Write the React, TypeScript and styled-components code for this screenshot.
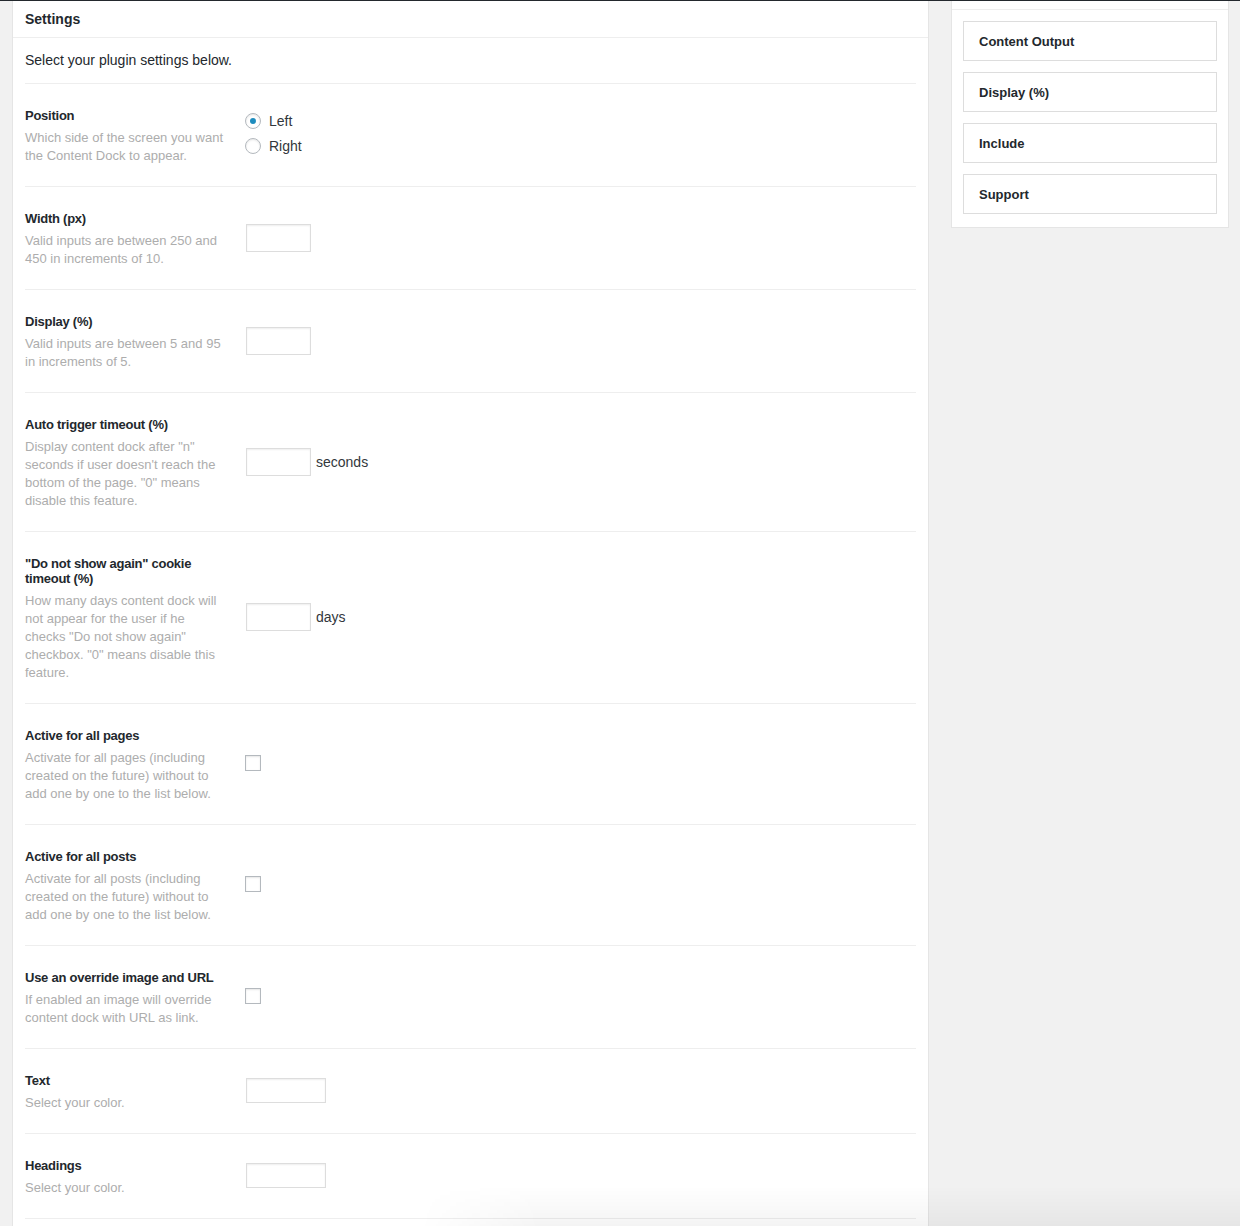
import React from 'react'
import styled, { createGlobalStyle } from 'styled-components'

const GlobalStyle = createGlobalStyle`
  html, body {
    margin: 0;
    padding: 0;
    height: 1226px;
    overflow: hidden;
    background: #f1f1f1;
    font-family: "Liberation Sans", Arial, sans-serif;
    color: #23282d;
  }
  * { box-sizing: border-box; }
`

const Page = styled.div`
  display: flex;
  align-items: flex-start;
  gap: 22px;
  padding: 0 11px 0 12px;
  border-top: 1px solid #23282d;
  height: 1226px;
  position: relative;
`

const MainPanel = styled.section`
  flex: 1;
  background: #fff;
  border: 1px solid #e5e5e5;
  border-top: none;
  min-height: 1240px;
`

const PanelHeader = styled.h2`
  margin: 0;
  height: 37px;
  padding: 0 12px;
  display: flex;
  align-items: center;
  font-size: 14px;
  font-weight: 600;
  color: #23282d;
  border-bottom: 1px solid #eee;
`

const PanelBody = styled.div`
  padding: 0 12px;
`

const Intro = styled.p`
  margin: 0;
  padding: 13px 0 13px;
  font-size: 14px;
  line-height: 19px;
  color: #23282d;
  border-bottom: 1px solid #eee;
`

const Row = styled.div`
  display: grid;
  grid-template-columns: 220px 1fr;
  align-items: center;
  padding: 24px 0 21px;
  border-bottom: 1px solid #eee;
`

const LabelCol = styled.div`
  width: 200px;
`

const Label = styled.div`
  font-size: 13px;
  line-height: 15px;
  font-weight: 700;
  letter-spacing: -0.25px;
  color: #23282d;
  margin-bottom: 6px;
`

const Desc = styled.div`
  font-size: 13px;
  line-height: 18px;
  color: #adadad;
`

const Field = styled.div<{ $lift?: number }>`
  display: flex;
  align-items: center;
  margin-bottom: ${({ $lift = 4 }) => `${$lift}px`};
`

const RadioGroup = styled.div`
  display: flex;
  flex-direction: column;
  align-self: start;
`

const RadioItem = styled.label`
  display: flex;
  align-items: center;
  height: 25px;
  font-size: 14px;
  color: #32373c;
  gap: 8px;
`

const RadioCircle = styled.span<{ $checked?: boolean }>`
  width: 16px;
  height: 16px;
  border-radius: 50%;
  border: 1px solid #b4b9be;
  background: #fff;
  box-shadow: inset 0 1px 2px rgba(0, 0, 0, 0.1);
  display: flex;
  align-items: center;
  justify-content: center;
  &::after {
    content: '';
    display: ${({ $checked }) => ($checked ? 'block' : 'none')};
    width: 6px;
    height: 6px;
    border-radius: 50%;
    background: #1e8cbe;
  }
`

const TextInput = styled.div<{ $wide?: boolean }>`
  width: ${({ $wide }) => ($wide ? '80px' : '65px')};
  height: ${({ $wide }) => ($wide ? '25px' : '28px')};
  margin-left: 1px;
  border: 1px solid #ddd;
  background: #fff;
  box-shadow: inset 0 1px 2px rgba(0, 0, 0, 0.07);
`

const Unit = styled.span`
  font-size: 14px;
  color: #32373c;
  margin-left: 5px;
`

const Checkbox = styled.span`
  width: 16px;
  height: 16px;
  border: 1px solid #b4b9be;
  background: #fff;
  box-shadow: inset 0 1px 2px rgba(0, 0, 0, 0.1);
`

const Sidebar = styled.aside`
  width: 278px;
  flex-shrink: 0;
  background: #fff;
  border: 1px solid #e5e5e5;
  border-top: none;
`

const SidebarHeader = styled.div`
  height: 9px;
  border-bottom: 1px solid #eee;
`

const SidebarList = styled.nav`
  display: flex;
  flex-direction: column;
  gap: 11px;
  padding: 11px 11px 13px;
`

const SidebarButton = styled.div`
  height: 40px;
  display: flex;
  align-items: center;
  padding: 0 15px;
  border: 1px solid #ddd;
  background: #fff;
  font-size: 13px;
  font-weight: 700;
  color: #23282d;
`

const BottomShade = styled.div`
  position: absolute;
  left: 420px;
  right: 0;
  bottom: 0;
  height: 40px;
  pointer-events: none;
  background: linear-gradient(to bottom, rgba(0, 0, 0, 0), rgba(0, 0, 0, 0.045));
  -webkit-mask-image: linear-gradient(to right, transparent, #000 120px);
  mask-image: linear-gradient(to right, transparent, #000 120px);
`

type Setting =
  | { label: string; desc: string; kind: 'radio' }
  | { label: string; desc: string; kind: 'input'; unit?: string }
  | { label: string; desc: string; kind: 'check' }
  | { label: string; desc: string; kind: 'color' }

const settings: Setting[] = [
  { label: 'Position', desc: 'Which side of the screen you want the Content Dock to appear.', kind: 'radio' },
  { label: 'Width (px)', desc: 'Valid inputs are between 250 and 450 in increments of 10.', kind: 'input' },
  { label: 'Display (%)', desc: 'Valid inputs are between 5 and 95 in increments of 5.', kind: 'input' },
  {
    label: 'Auto trigger timeout (%)',
    desc: 'Display content dock after "n" seconds if user doesn\'t reach the bottom of the page. "0" means disable this feature.',
    kind: 'input',
    unit: 'seconds',
  },
  {
    label: '"Do not show again" cookie timeout (%)',
    desc: 'How many days content dock will not appear for the user if he checks "Do not show again" checkbox. "0" means disable this feature.',
    kind: 'input',
    unit: 'days',
  },
  {
    label: 'Active for all pages',
    desc: 'Activate for all pages (including created on the future) without to add one by one to the list below.',
    kind: 'check',
  },
  {
    label: 'Active for all posts',
    desc: 'Activate for all posts (including created on the future) without to add one by one to the list below.',
    kind: 'check',
  },
  {
    label: 'Use an override image and URL',
    desc: 'If enabled an image will override content dock with URL as link.',
    kind: 'check',
  },
  { label: 'Text', desc: 'Select your color.', kind: 'color' },
  { label: 'Headings', desc: 'Select your color.', kind: 'color' },
]

function renderField(s: Setting) {
  switch (s.kind) {
    case 'radio':
      return (
        <RadioGroup>
          <RadioItem>
            <RadioCircle $checked />
            Left
          </RadioItem>
          <RadioItem>
            <RadioCircle />
            Right
          </RadioItem>
        </RadioGroup>
      )
    case 'input':
      return (
        <Field>
          <TextInput />
          {s.unit && <Unit>{s.unit}</Unit>}
        </Field>
      )
    case 'check':
      return (
        <Field $lift={6}>
          <Checkbox />
        </Field>
      )
    case 'color':
      return (
        <Field>
          <TextInput $wide />
        </Field>
      )
  }
}

const sideLinks = ['Content Output', 'Display (%)', 'Include', 'Support']

export default function App() {
  return (
    <>
      <GlobalStyle />
      <Page>
        <MainPanel>
          <PanelHeader>Settings</PanelHeader>
          <PanelBody>
            <Intro>Select your plugin settings below.</Intro>
            {settings.map((s) => (
              <Row key={s.label}>
                <LabelCol>
                  <Label>{s.label}</Label>
                  <Desc>{s.desc}</Desc>
                </LabelCol>
                {renderField(s)}
              </Row>
            ))}
          </PanelBody>
        </MainPanel>
        <Sidebar>
          <SidebarHeader />
          <SidebarList>
            {sideLinks.map((l) => (
              <SidebarButton key={l}>{l}</SidebarButton>
            ))}
          </SidebarList>
        </Sidebar>
        <BottomShade />
      </Page>
    </>
  )
}
